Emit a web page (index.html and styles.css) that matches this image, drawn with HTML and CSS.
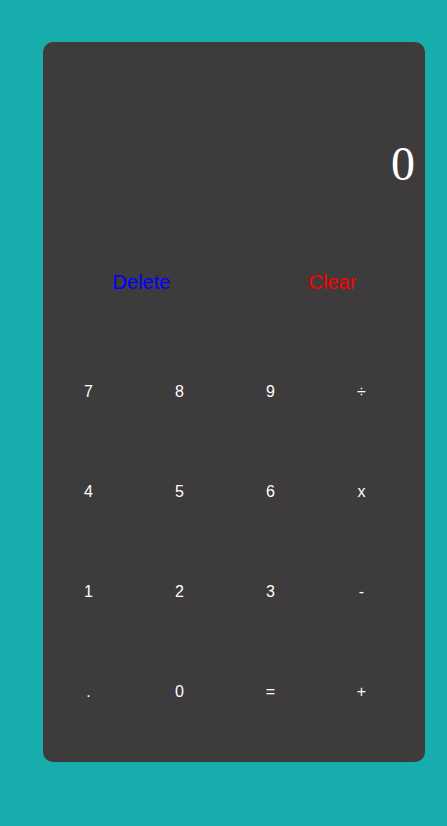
FILE: index.html
```html
<!DOCTYPE html>
<html>
<head>
<meta charset="utf-8">
<link rel="stylesheet" href="styles.css">
</head>
<body>
<div class="calc">
  <div class="display">0</div>
  <div class="actions">
    <button class="act delete">Delete</button>
    <button class="act clear">Clear</button>
  </div>
  <div class="keys">
    <button class="key">7</button>
    <button class="key">8</button>
    <button class="key">9</button>
    <button class="key">÷</button>
    <button class="key">4</button>
    <button class="key">5</button>
    <button class="key">6</button>
    <button class="key">x</button>
    <button class="key">1</button>
    <button class="key">2</button>
    <button class="key">3</button>
    <button class="key">-</button>
    <button class="key">.</button>
    <button class="key">0</button>
    <button class="key">=</button>
    <button class="key">+</button>
  </div>
</div>
</body>
</html>
```
FILE: styles.css
```css
html, body {
  margin: 0;
  padding: 0;
}
body {
  background: #17adad;
  width: 447px;
  height: 826px;
  padding-top: 42px;
  padding-left: 43px;
  box-sizing: border-box;
}
.calc {
  width: 382px;
  height: 720px;
  background: #3d3b3c;
  border-radius: 10px;
  box-sizing: border-box;
}
.display {
  height: 190px;
  box-sizing: border-box;
  padding-top: 98px;
  padding-right: 10px;
  text-align: right;
  font-family: "Liberation Serif", serif;
  font-size: 48px;
  line-height: 48px;
  color: #fff;
}
button {
  background: none;
  border: none;
  padding: 0;
  margin: 0;
  cursor: pointer;
}
.actions {
  display: grid;
  grid-template-columns: 191px 191px;
  height: 100px;
  padding-left: 3px;
}
.act {
  font-family: "Liberation Sans", Arial, sans-serif;
  font-size: 20px;
  height: 100px;
}
.delete { color: #0000ff; }
.clear { color: #ff0000; }
.keys {
  display: grid;
  grid-template-columns: repeat(4, 91px);
  grid-auto-rows: 100px;
  width: 364px;
  margin-top: 10px;
}
.key {
  font-family: "Liberation Sans", Arial, sans-serif;
  font-size: 16px;
  color: #fff;
}
```
